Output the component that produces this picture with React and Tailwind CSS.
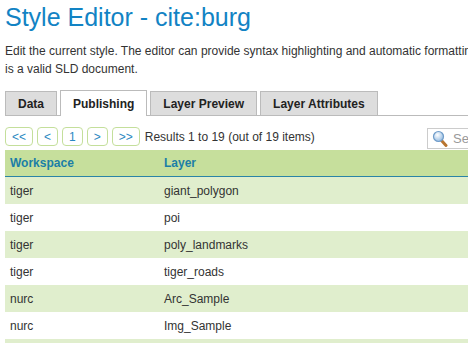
import React from "react";

const rows = [
  ["tiger", "giant_polygon"],
  ["tiger", "poi"],
  ["tiger", "poly_landmarks"],
  ["tiger", "tiger_roads"],
  ["nurc", "Arc_Sample"],
  ["nurc", "Img_Sample"],
  ["nurc", "Pk50095"],
];

function Tab({ label, active }) {
  return active ? (
    <div className="h-[26px] -mb-[1px] px-[12px] bg-white border border-b-0 border-[#bbbbbb] flex items-center font-bold text-[12px] text-[#222]">
      {label}
    </div>
  ) : (
    <div className="h-[24px] px-[12px] bg-[#dddddd] border border-b-0 border-[#bbbbbb] flex items-center font-bold text-[12px] text-[#222]">
      {label}
    </div>
  );
}

function PBtn({ children }) {
  return (
    <div className="h-[19px] px-[6px] rounded-[4px] border border-[#c4df9b] flex items-center text-[12px] text-[#2a88c2] bg-white">
      {children}
    </div>
  );
}

export default function App() {
  return (
    <div className="w-[468px] h-[343px] overflow-hidden bg-white font-['Liberation_Sans',Arial,sans-serif] text-[#333]">
      <div className="pl-[5px] w-[577px]">
        <h1 className="pt-[3px] text-[25px] leading-[28px] text-[#1283c4] whitespace-nowrap">
          Style Editor - cite:burg
        </h1>
        <p className="mt-[11px] text-[12px] leading-[18px] whitespace-nowrap">
          Edit the current style. The editor can provide syntax highlighting and automatic formatting and checks if the style
          <br />
          is a valid SLD document.
        </p>
        <div className="mt-[12px] flex items-end gap-[3px] border-b border-[#bbbbbb]">
          <Tab label="Data" />
          <Tab label="Publishing" active />
          <Tab label="Layer Preview" />
          <Tab label="Layer Attributes" />
        </div>
        <div className="mt-[11px] h-[23px] flex items-start">
          <div className="flex gap-[4px]">
            <PBtn>&lt;&lt;</PBtn>
            <PBtn>&lt;</PBtn>
            <PBtn>1</PBtn>
            <PBtn>&gt;</PBtn>
            <PBtn>&gt;&gt;</PBtn>
          </div>
          <div className="ml-[5px] h-[19px] flex items-center text-[12px] text-[#333] whitespace-nowrap">
            Results 1 to 19 (out of 19 items)
          </div>
          <div className="ml-auto mt-[1px] w-[150px] h-[21px] border border-[#cccccc] flex items-center">
            <svg width="16" height="17" viewBox="0 0 16 17" className="ml-[4px]">
              <defs>
                <radialGradient id="g" cx="0.4" cy="0.35" r="0.7">
                  <stop offset="0" stopColor="#ffffff" />
                  <stop offset="1" stopColor="#8fb8e0" />
                </radialGradient>
              </defs>
              <line x1="9.5" y1="10.5" x2="14" y2="15.5" stroke="#b8752f" strokeWidth="3" strokeLinecap="round" />
              <circle cx="6.5" cy="6.5" r="5" fill="url(#g)" stroke="#6f9cc9" strokeWidth="1.2" />
            </svg>
            <span className="ml-[5px] text-[13px] text-[#999]">Search</span>
          </div>
        </div>
        <div>
          <div className="h-[27px] bg-[#c6df9c] border-b border-[#2a84a6] flex items-center text-[12px] font-bold text-[#1b7ea7]">
            <div className="w-[154px] pl-[5px]">Workspace</div>
            <div className="pl-[5px]">Layer</div>
          </div>
          {rows.map(([ws, layer], i) => (
            <div
              key={i}
              className={
                "h-[27px] flex items-center text-[12px] text-[#333] " +
                (i % 2 === 0 ? "bg-[#e0eecd]" : "bg-white")
              }
            >
              <div className="w-[154px] pl-[5px]">{ws}</div>
              <div className="pl-[5px]">{layer}</div>
            </div>
          ))}
        </div>
      </div>
    </div>
  );
}
